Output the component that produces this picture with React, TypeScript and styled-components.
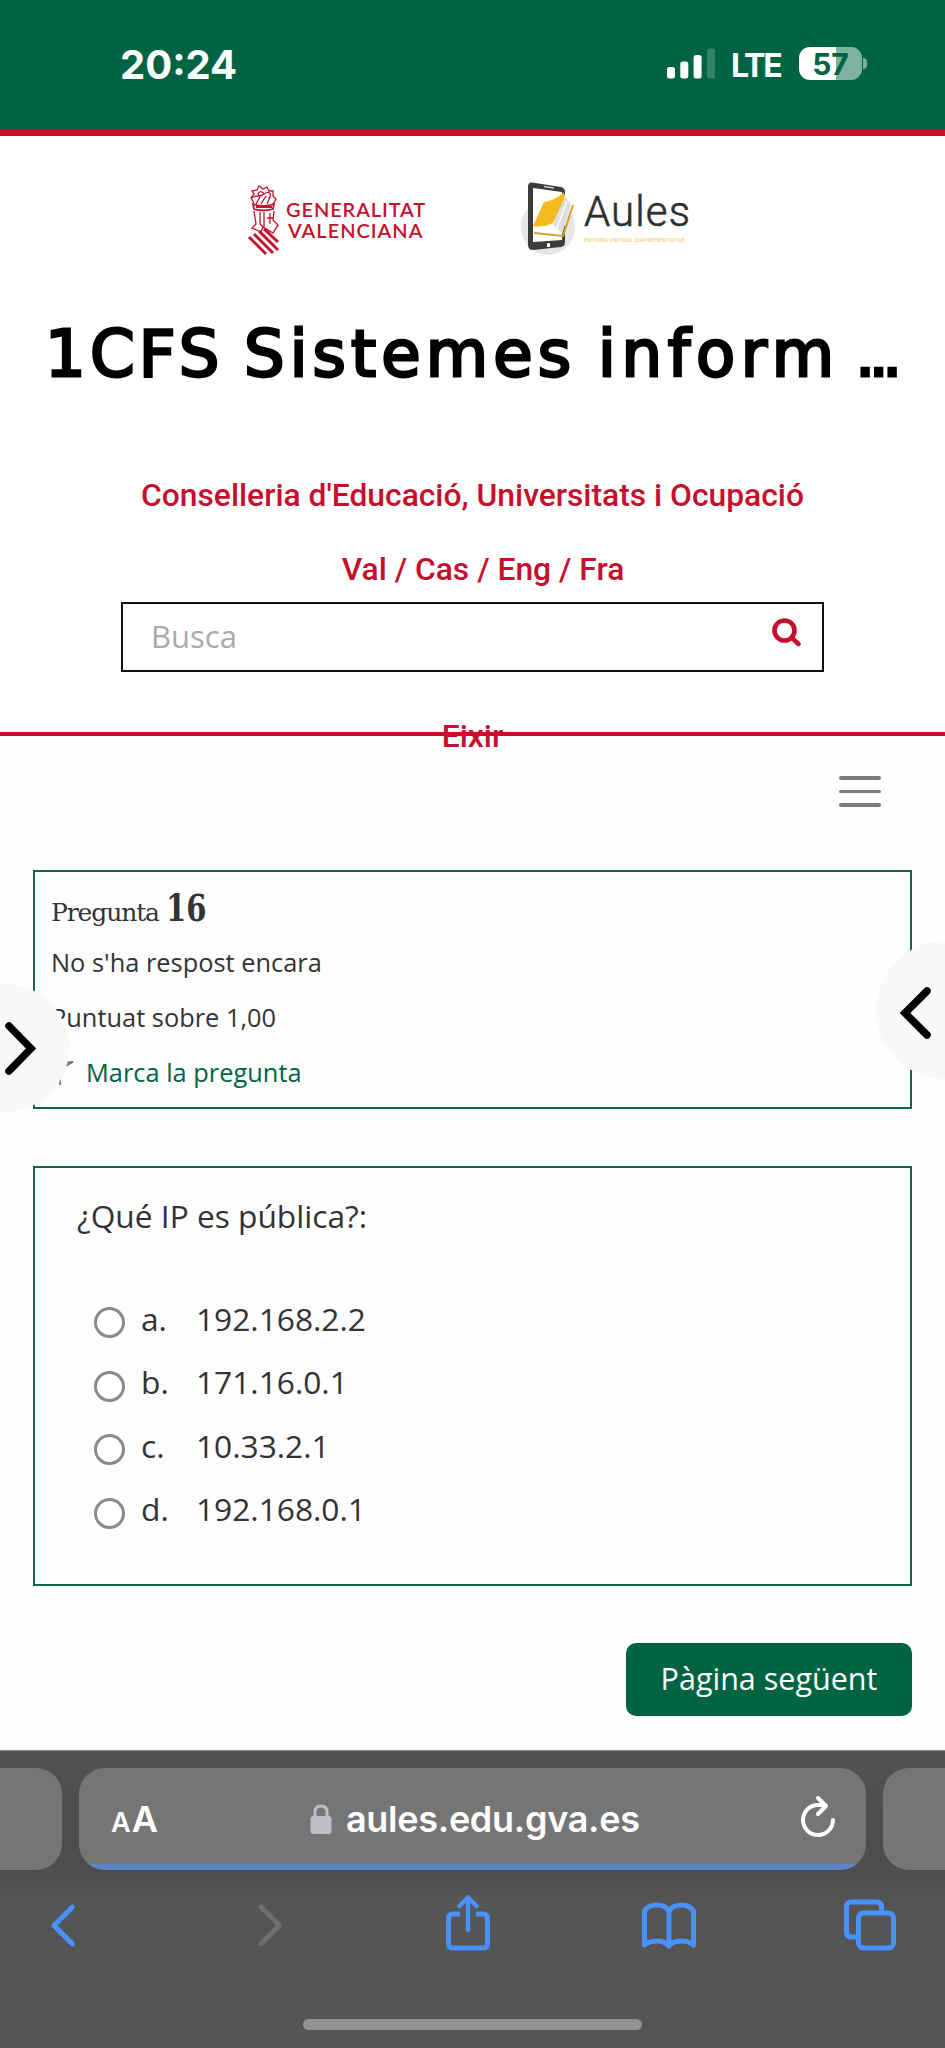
import React from "react";
import styled, { createGlobalStyle } from "styled-components";

const GREEN = "#006442";
const RED = "#c60f2c";
const BLUE = "#4a92fb";

const GlobalStyle = createGlobalStyle`
  * { box-sizing: border-box; }
  body { margin: 0; background: #fefefe; color: #333; font-family: "Open Sans", sans-serif; }
  h1, p { margin: 0; }
`;

const Screen = styled.div`
  display: flex;
  flex-direction: column;
  width: 945px;
  height: 2048px;
  overflow: hidden;
  position: relative;
`;

/* Status bar */
const StatusBar = styled.div`
  flex: none;
  display: flex;
  justify-content: space-between;
  height: 136px;
  padding: 40px 78px 0 120px;
  background: ${GREEN};
  border-bottom: 6px solid ${RED};
  color: #fff;
  font-family: Inter, sans-serif;
`;
const Clock = styled.span`
  font-size: 40px;
  font-weight: 700;
  line-height: 49px;
`;
const StatusRight = styled.div`
  display: flex;
  align-items: flex-start;
`;
const Bars = styled.svg`
  margin-top: 8px;
`;
const Network = styled.span`
  width: 51px;
  margin: 2px 17px 0 16px;
  font-size: 32px;
  font-weight: 650;
  line-height: 47px;
  letter-spacing: -2.2px;
`;
const Battery = styled.div`
  display: flex;
  align-items: center;
  gap: 1px;
  margin-top: 7px;
`;
const BatteryBody = styled.div`
  width: 63px;
  height: 33px;
  border-radius: 11px;
  background: linear-gradient(90deg, #fff 58%, #80b2a0 58%);
  color: ${GREEN};
  font-size: 30px;
  font-weight: 700;
  line-height: 34px;
  text-align: center;
`;
const BatteryTip = styled.div`
  width: 4px;
  height: 11px;
  border-radius: 0 5px 5px 0;
  background: #80b2a0;
`;

/* Site header */
const Header = styled.header`
  flex: none;
  display: flex;
  flex-direction: column;
  align-items: center;
  height: 600px;
  border-bottom: 4px solid ${RED};
  background: #fff;
`;
const Logos = styled.div`
  flex: none;
  display: flex;
  align-items: flex-start;
  align-self: stretch;
  height: 178px;
  padding: 45px 0 0 246px;
`;
const Generalitat = styled.div`
  display: flex;
  width: 274px;
`;
const GvaName = styled.div`
  display: flex;
  flex-direction: column;
  margin: 18px 0 0 6px;
  color: ${RED};
  font: 600 20px/20.5px Lato, sans-serif;
`;
const GvaLine = styled.span<{ $space: number; $indent?: number }>`
  letter-spacing: ${(p) => p.$space}px;
  margin-left: ${(p) => p.$indent ?? 0}px;
`;
const Aules = styled.div`
  display: flex;
`;
const AulesName = styled.div`
  display: flex;
  flex-direction: column;
  margin: 8px 0 0 6px;
`;
const AulesWord = styled.span`
  font: 300 42px/46px Roboto, sans-serif;
  letter-spacing: 1.1px;
  color: #2e2e2e;
  -webkit-text-stroke: 0.6px #2e2e2e;
`;
const AulesTag = styled.span`
  font: 500 6px/9px Roboto, sans-serif;
  letter-spacing: 0.05px;
  color: #f6cf75;
  white-space: nowrap;
`;
const Title = styled.h1`
  flex: none;
  display: flex;
  align-self: stretch;
  height: 80px;
  padding-left: 45px;
  color: #000;
  font: 400 64px/80px "DejaVu Sans", sans-serif;
  -webkit-text-stroke: 2.8px #000;
`;
const TitleWord = styled.span<{ $width: number; $space: number }>`
  flex: none;
  width: ${(p) => p.$width}px;
  letter-spacing: ${(p) => p.$space}px;
  white-space: nowrap;
`;
const HeaderText = styled.p<{ $top?: number; $left?: number }>`
  flex: none;
  margin-top: ${(p) => p.$top ?? 0}px;
  margin-left: ${(p) => p.$left ?? 0}px;
  color: ${RED};
  font: 500 31.8px/40px Roboto, sans-serif;
  white-space: nowrap;
`;
const SearchBox = styled.div`
  flex: none;
  display: flex;
  justify-content: space-between;
  width: 703px;
  height: 70px;
  margin-top: 13px;
  padding: 0 20px 0 28px;
  border: 2px solid #111;
  color: #aaa;
  font-size: 31px;
  line-height: 65px;
`;
const SearchIcon = styled.svg`
  margin-top: 14px;
`;

/* Question page */
const Page = styled.main`
  flex: 1;
  display: flex;
  flex-direction: column;
  padding: 0 33px;
`;
const MenuButton = styled.div`
  display: flex;
  flex-direction: column;
  gap: 10px;
  align-self: flex-end;
  height: 94px;
  margin: 40px 31px 0 0;
`;
const MenuLine = styled.span`
  width: 42px;
  height: 3.5px;
  border-radius: 2px;
  background: #7b7b7b;
`;
const Card = styled.section`
  flex: none;
  border: 2px solid #11664a;
`;
const InfoCard = styled(Card)`
  height: 239px;
  padding: 16px 16px 0;
`;
const QuestionCard = styled(Card)`
  height: 420px;
  margin-top: 57px;
  padding: 26px 42px 0;
`;
const QuestionNo = styled.div`
  display: flex;
  align-items: baseline;
  height: 47px;
  color: #333;
  font-family: "DejaVu Serif", serif;
`;
const QuestionLabel = styled.span`
  width: 115px;
  font-size: 25px;
  letter-spacing: -1.1px;
  white-space: nowrap;
`;
const Num = styled.span`
  font: 700 38px/40px "DejaVu Serif Condensed", "DejaVu Serif", serif;
  transform: scaleX(0.85);
  transform-origin: left;
`;
const InfoRow = styled.div`
  display: flex;
  align-items: center;
  font-size: 25.4px;
  line-height: 55px;
`;
const MarkLink = styled.a`
  display: flex;
  color: ${GREEN};
`;
const FlagIcon = styled.svg`
  width: 35px;
  height: 54px;
`;
const QuestionText = styled.p`
  height: 92.5px;
  font-size: 31.7px;
  line-height: 44px;
`;
const Option = styled.label`
  display: flex;
  align-items: center;
  height: 63.5px;
  padding-left: 17px;
  font-size: 31.7px;
  line-height: 63.5px;
`;
const Radio = styled.span`
  width: 31px;
  height: 31px;
  margin: 9px 16px 0 0;
  border: 3.5px solid #8a8a8a;
  border-radius: 50%;
  background: #fff;
`;
const OptionLetter = styled.span`
  width: 55px;
`;
const NextButton = styled.button`
  align-self: flex-end;
  width: 286px;
  height: 73px;
  margin-top: 57px;
  padding: 0 0 3px;
  border: 0;
  border-radius: 10px;
  background: ${GREEN};
  color: #fff;
  font: 400 30.5px "Open Sans", sans-serif;
`;

/* Drawer handles float over the page edges */
const Drawer = styled.div<{ $left: number; $top: number; $size: number }>`
  position: absolute;
  left: ${(p) => p.$left}px;
  top: ${(p) => p.$top}px;
  width: ${(p) => p.$size}px;
  height: ${(p) => p.$size}px;
  border-radius: 50%;
  background: #f8f8f8;
`;
const Chevron = styled.svg`
  display: block;
  fill: none;
  stroke: #000;
  stroke-width: 7.5;
  stroke-linecap: round;
`;

/* Browser chrome */
const Browser = styled.footer`
  flex: none;
  display: flex;
  flex-direction: column;
  height: 298px;
  padding-top: 17px;
  border-top: 1px solid #8b8b8b;
  background: linear-gradient(#525252 0, #4d4d4d 60px, #4d4d4d 122px, #555 150px);
`;
const Tabs = styled.div`
  display: flex;
  justify-content: space-between;
  height: 102px;
`;
const SideTab = styled.div<{ $right?: boolean }>`
  width: 62px;
  border-radius: ${(p) => (p.$right ? "26px 0 0 26px" : "0 26px 26px 0")};
  background: #757575;
`;
const AddressBar = styled.div`
  display: flex;
  align-items: flex-start;
  width: 787px;
  padding: 0 0 0 32px;
  border-radius: 26px;
  overflow: hidden;
  background: linear-gradient(#757575 96px, #5b86c5 96px);
  color: #fff;
  font-family: Inter, sans-serif;
`;
const TextSize = styled.div`
  display: flex;
  align-items: baseline;
  width: 199px;
  line-height: 102px;
  font-weight: 600;
`;
const Glyph = styled.span<{ $size: number }>`
  font-size: ${(p) => p.$size}px;
  margin-right: 1px;
`;
const Lock = styled.svg`
  margin-top: 36px;
`;
const Url = styled.span`
  width: 454px;
  margin-left: 14px;
  font-size: 36px;
  font-weight: 600;
  line-height: 102px;
  letter-spacing: -0.3px;
`;
const Reload = styled.svg`
  margin-top: 27px;
`;
const Tools = styled.div`
  display: flex;
  justify-content: space-between;
  height: 149px;
  padding: 21px 47px 0 35px;
`;
const Tool = styled.svg<{ $muted?: boolean }>`
  width: 56px;
  height: 64px;
  fill: none;
  stroke: ${(p) => (p.$muted ? "#6f6f6f" : BLUE)};
  stroke-width: 5;
  stroke-linecap: round;
  stroke-linejoin: round;
`;
const HomeBar = styled.div`
  align-self: center;
  width: 339px;
  height: 11px;
  border-radius: 6px;
  background: #929292;
`;

const OPTIONS = [
  ["a.", "192.168.2.2"],
  ["b.", "171.16.0.1"],
  ["c.", "10.33.2.1"],
  ["d.", "192.168.0.1"],
];

const Emblem = () => (
  <svg width="34" height="76" viewBox="0 0 34 76" fill="none" stroke={RED} strokeWidth="1.3">
    <path d="M8 22 L5 17 L8 13 L6 10 L11 9 L13 5 L17 8 L21 6 L23 10 L27 10 L27 15 L30 18 L27 23" />
    <path d="M6 17 C10 13 14 17 18 13 C15 8 11 12 13 15 M18 13 C24 9 26 14 23 17 M10 23 L15 14 M15 23 L20 15 M21 23 L24 16" />
    <path d="M7 23 Q17 27 28 23 L27 28 Q17 31 8 28 Z M10 26 H26" strokeWidth="1.8" />
    <path d="M8 30 L10 43 L6 47 L15 51 L17 46 L27 52 L32 44 L27 39 L28 30 M14 31 V43 L17 46 M18 31 V46 M21 37 H27 M24 32 V43" />
    <path
      d="M3 56 L20 73 M8 53 L27 72 M13 50 L32 69 M18 48 L32 61"
      strokeWidth="3"
    />
  </svg>
);

const AulesIcon = () => (
  <svg width="58" height="76" viewBox="0 0 58 76">
    <ellipse cx="28" cy="46" rx="27" ry="28" fill="#e6e6e6" />
    <path d="M12 1.5 L41 6 Q45 7 45 11 V61 Q45 65 41 66 L13 69 Q8 69 8 64 V6 Q8 1 12 1.5Z" fill="#3b3c3e" />
    <path d="M13 7 L42 11 V59 L13 61Z" fill="#fff" />
    <path d="M24 5.5 L34 7" stroke="#ccc" strokeWidth="1.6" />
    <path d="M14 52 L43 55 L53 24" fill="none" stroke="#d5a31d" strokeWidth="2" />
    <path d="M14 48 L42 53 L51 24 L44 14 L13 44Z" fill="#fff" />
    <path d="M33 44 L44 13 L51 24 L42 52Z" fill="#dedee1" />
    <path d="M37 47 L47 20" stroke="#fff" strokeWidth="1.2" />
    <path d="M24 21 Q36 19 44 11 V18 L33 42 Q23 47 13 45Z" fill="#f5b91f" />
    <rect x="27" y="62" width="3" height="4" rx="1" fill="#fff" />
  </svg>
);

export default function App() {
  return (
    <Screen>
      <GlobalStyle />
      <StatusBar>
        <Clock>20:24</Clock>
        <StatusRight>
          <Bars width="48" height="31" viewBox="0 0 48 31" fill="#fff">
            <rect x="0" y="19" width="8" height="11.5" rx="2.5" />
            <rect x="13.3" y="13.5" width="8" height="17" rx="2.5" />
            <rect x="26.6" y="7" width="8" height="23.5" rx="2.5" />
            <rect x="40" y="0.5" width="8" height="30" rx="2.5" opacity="0.2" />
          </Bars>
          <Network>LTE</Network>
          <Battery>
            <BatteryBody>57</BatteryBody>
            <BatteryTip />
          </Battery>
        </StatusRight>
      </StatusBar>

      <Header>
        <Logos>
          <Generalitat>
            <Emblem />
            <GvaName>
              <GvaLine $space={0.9}>GENERALITAT</GvaLine>
              <GvaLine $space={1} $indent={2}>VALENCIANA</GvaLine>
            </GvaName>
          </Generalitat>
          <Aules>
            <AulesIcon />
            <AulesName>
              <AulesWord>Aules</AulesWord>
              <AulesTag>ENTORN VIRTUAL D'APRENENTATGE</AulesTag>
            </AulesName>
          </Aules>
        </Logos>
        <Title>
          <TitleWord $width={199} $space={4.2}>1CFS</TitleWord>
          <TitleWord $width={354} $space={5.1}>Sistemes</TitleWord>
          <TitleWord $width={257} $space={5.7}>inform</TitleWord>
          <TitleWord $width={60} $space={-6.8}>...</TitleWord>
        </Title>
        <HeaderText $top={80.5}>Conselleria d'Educació, Universitats i Ocupació</HeaderText>
        <HeaderText $top={34.5} $left={21}>Val / Cas / Eng / Fra</HeaderText>
        <SearchBox>
          <span>Busca</span>
          <SearchIcon width="30" height="30" viewBox="0 0 30 30" fill="none" stroke={RED} strokeWidth="4.6" strokeLinecap="round">
            <circle cx="12.5" cy="12.5" r="10" />
            <path d="M20 20 L26.5 26" />
          </SearchIcon>
        </SearchBox>
        <HeaderText $top={44}>Eixir</HeaderText>
      </Header>

      <Page>
        <MenuButton>
          <MenuLine />
          <MenuLine />
          <MenuLine />
        </MenuButton>
        <InfoCard>
          <QuestionNo>
            <QuestionLabel>Pregunta</QuestionLabel>
            <Num>16</Num>
          </QuestionNo>
          <InfoRow>No s'ha respost encara</InfoRow>
          <InfoRow>Puntuat sobre 1,00</InfoRow>
          <InfoRow>
            <MarkLink>
              <FlagIcon viewBox="0 0 35 54" fill="none" stroke="#777" strokeWidth="1.8">
                <path d="M2 19 L22 17 L11 23 L9 30 V40" />
              </FlagIcon>
              Marca la pregunta
            </MarkLink>
          </InfoRow>
        </InfoCard>
        <QuestionCard>
          <QuestionText>¿Qué IP es pública?:</QuestionText>
          {OPTIONS.map(([letter, text]) => (
            <Option key={letter}>
              <Radio />
              <OptionLetter>{letter}</OptionLetter>
              {text}
            </Option>
          ))}
        </QuestionCard>
        <NextButton>Pàgina següent</NextButton>
      </Page>

      <Drawer $left={-59} $top={984} $size={128}>
        <Chevron width="128" height="128" viewBox="0 0 128 128">
          <path d="M68 42 L90 64.5 L68 87" />
        </Chevron>
      </Drawer>
      <Drawer $left={876} $top={941} $size={138}>
        <Chevron width="138" height="138" viewBox="0 0 138 138">
          <path d="M51 50 L29 72 L51 94" />
        </Chevron>
      </Drawer>

      <Browser>
        <Tabs>
          <SideTab />
          <AddressBar>
            <TextSize>
              <Glyph $size={27}>A</Glyph>
              <Glyph $size={36}>A</Glyph>
            </TextSize>
            <Lock width="22" height="31" viewBox="0 0 22 31">
              <path d="M5 14 V8 Q5 2 11 2 Q17 2 17 8 V14" fill="none" stroke="#bfbdc6" strokeWidth="3" />
              <rect x="0.5" y="12" width="21" height="18" rx="3" fill="#bfbdc6" />
            </Lock>
            <Url>aules.edu.gva.es</Url>
            <Reload width="36" height="44" viewBox="0 0 36 44" fill="none" stroke="#fff" strokeWidth="4" strokeLinecap="round" strokeLinejoin="round">
              <path d="M33 25 A15 15 0 1 1 18 10 H25" />
              <path d="M18 3 L26 11 L18 19" />
            </Reload>
          </AddressBar>
          <SideTab $right />
        </Tabs>
        <Tools>
          <Tool viewBox="0 0 56 64">
            <path d="M37.5 16 L19 34.5 L37.5 53" />
          </Tool>
          <Tool viewBox="0 0 56 64" $muted>
            <path d="M24 16 L42.5 34.5 L24 53" />
          </Tool>
          <Tool viewBox="0 0 56 64">
            <path d="M21 23 H14 Q9.5 23 9.5 28 V52 Q9.5 57 14 57 H44 Q48.5 57 48.5 52 V28 Q48.5 23 44 23 H37" strokeLinecap="butt" />
            <path d="M29 39 V7 M20.5 15 L29 6.5 L37.5 15" strokeWidth="4.5" />
          </Tool>
          <Tool viewBox="0 0 56 64">
            <path d="M29 20 Q25 14 17 14 Q8 14 4.5 20 V54 Q9 50 17 50 Q25 50 29 55 Q33 50 41 50 Q49 50 53.5 54 V20 Q50 14 41 14 Q33 14 29 20 V55" />
          </Tool>
          <Tool viewBox="0 0 56 64">
            <rect x="16.5" y="22" width="35" height="35" rx="5" />
            <path d="M39.5 19 V16 Q39.5 11 34.5 11 H9.5 Q4.5 11 4.5 16 V41 Q4.5 46 9.5 46 H13" />
          </Tool>
        </Tools>
        <HomeBar />
      </Browser>
    </Screen>
  );
}
